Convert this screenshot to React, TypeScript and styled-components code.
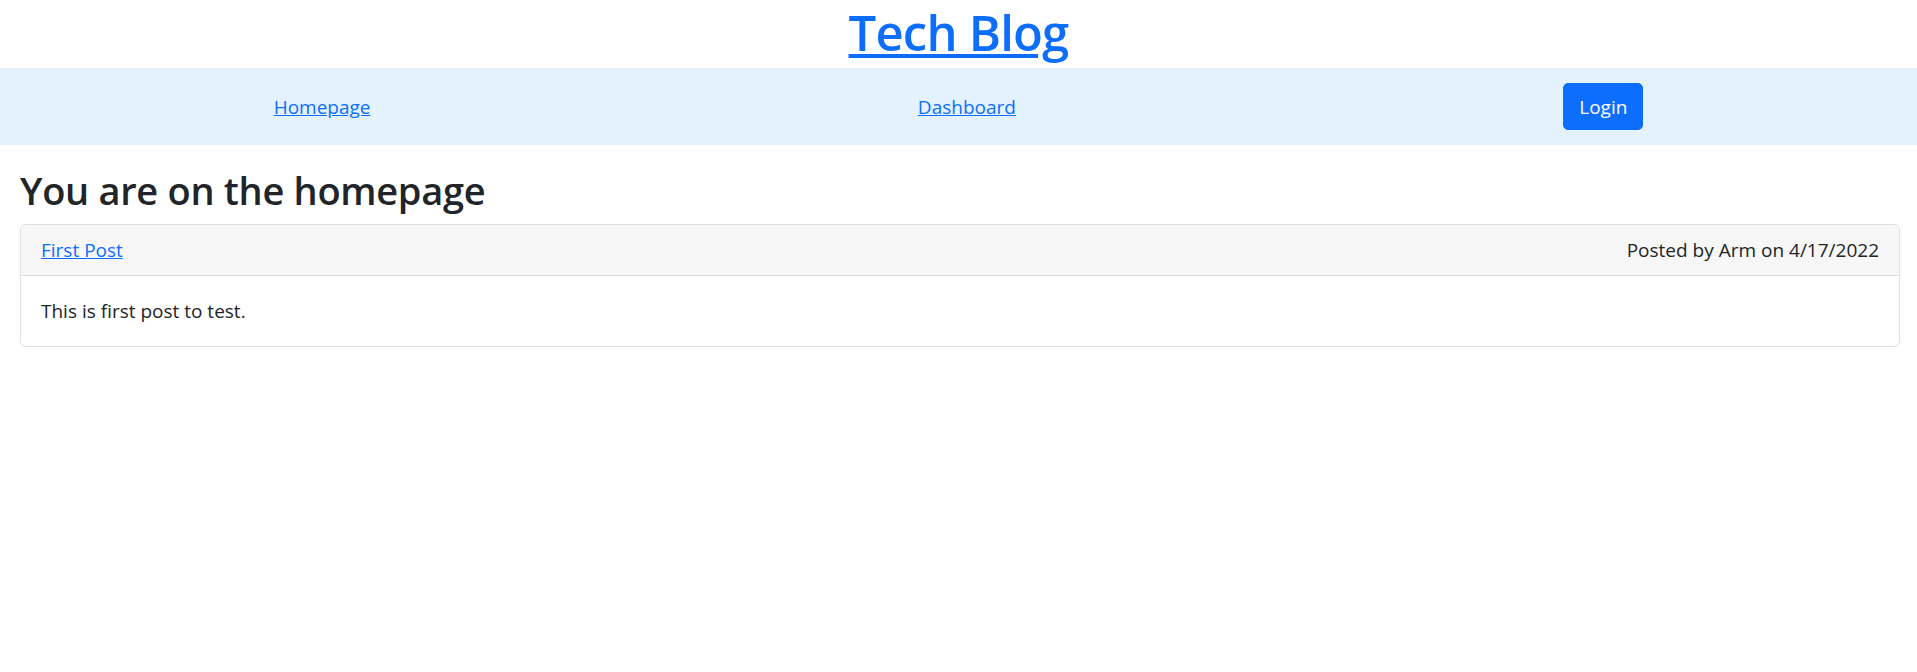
import React from "react";
import styled, { createGlobalStyle } from "styled-components";

const GlobalStyle = createGlobalStyle`
  html, body {
    margin: 0;
    padding: 0;
    background: #fff;
  }
  body {
    font-family: "Open Sans", "Noto Sans", "Liberation Sans", sans-serif;
    font-size: 19px;
    line-height: 1.5;
    color: #212529;
  }
  a {
    color: #0d6efd;
    text-decoration: underline;
  }
`;

const posts = [
  {
    id: 1,
    title: "First Post",
    author: "Arm",
    date: "4/17/2022",
    content: "This is first post to test.",
  },
];

export default function App() {
  return (
    <>
      <GlobalStyle />
      <Header>
        <SiteTitle>
          <a href="/">Tech Blog</a>
        </SiteTitle>
      </Header>
      <NavBar>
        <NavLink href="/">Homepage</NavLink>
        <NavLink href="/dashboard">Dashboard</NavLink>
        <LoginButton href="/login">Login</LoginButton>
      </NavBar>
      <Main>
        <PageHeading>You are on the homepage</PageHeading>
        {posts.map((post) => (
          <Card key={post.id}>
            <CardHeader>
              <a href={`/post/${post.id}`}>{post.title}</a>
              <span>
                Posted by {post.author} on {post.date}
              </span>
            </CardHeader>
            <CardBody>{post.content}</CardBody>
          </Card>
        ))}
      </Main>
    </>
  );
}

const Header = styled.header`
  display: flex;
  justify-content: center;
  padding: 2px 0 6px;
`;

const SiteTitle = styled.h1`
  margin: 0;
  font-size: 49px;
  font-weight: 600;
  line-height: 60px;
  letter-spacing: -0.8px;
`;

const NavBar = styled.nav`
  background: #e3f2fd;
  height: 77px;
  display: flex;
  align-items: center;
  justify-content: space-around;
`;

const NavLink = styled.a`
  font-size: 19px;
  line-height: 30px;
`;

const LoginButton = styled.a`
  display: inline-block;
  padding: 7.5px 15px;
  font-size: 19px;
  line-height: 30px;
  color: #fff !important;
  text-decoration: none;
  background: #0d6efd;
  border: 1px solid #0d6efd;
  border-radius: 5px;
`;

const Main = styled.main`
  padding: 21px 17px 0 20px;
`;

const PageHeading = styled.h2`
  margin: 0 0 10px;
  font-size: 38px;
  font-weight: 600;
  line-height: 48px;
  letter-spacing: -0.3px;
`;

const Card = styled.div`
  border: 1px solid #dfdfdf;
  border-radius: 6px;
  overflow: hidden;
`;

const CardHeader = styled.div`
  display: flex;
  justify-content: space-between;
  padding: 10px 20px;
  background: #f7f7f7;
  border-bottom: 1px solid #dfdfdf;
  line-height: 30px;
`;

const CardBody = styled.div`
  padding: 20px;
  line-height: 30px;
`;
